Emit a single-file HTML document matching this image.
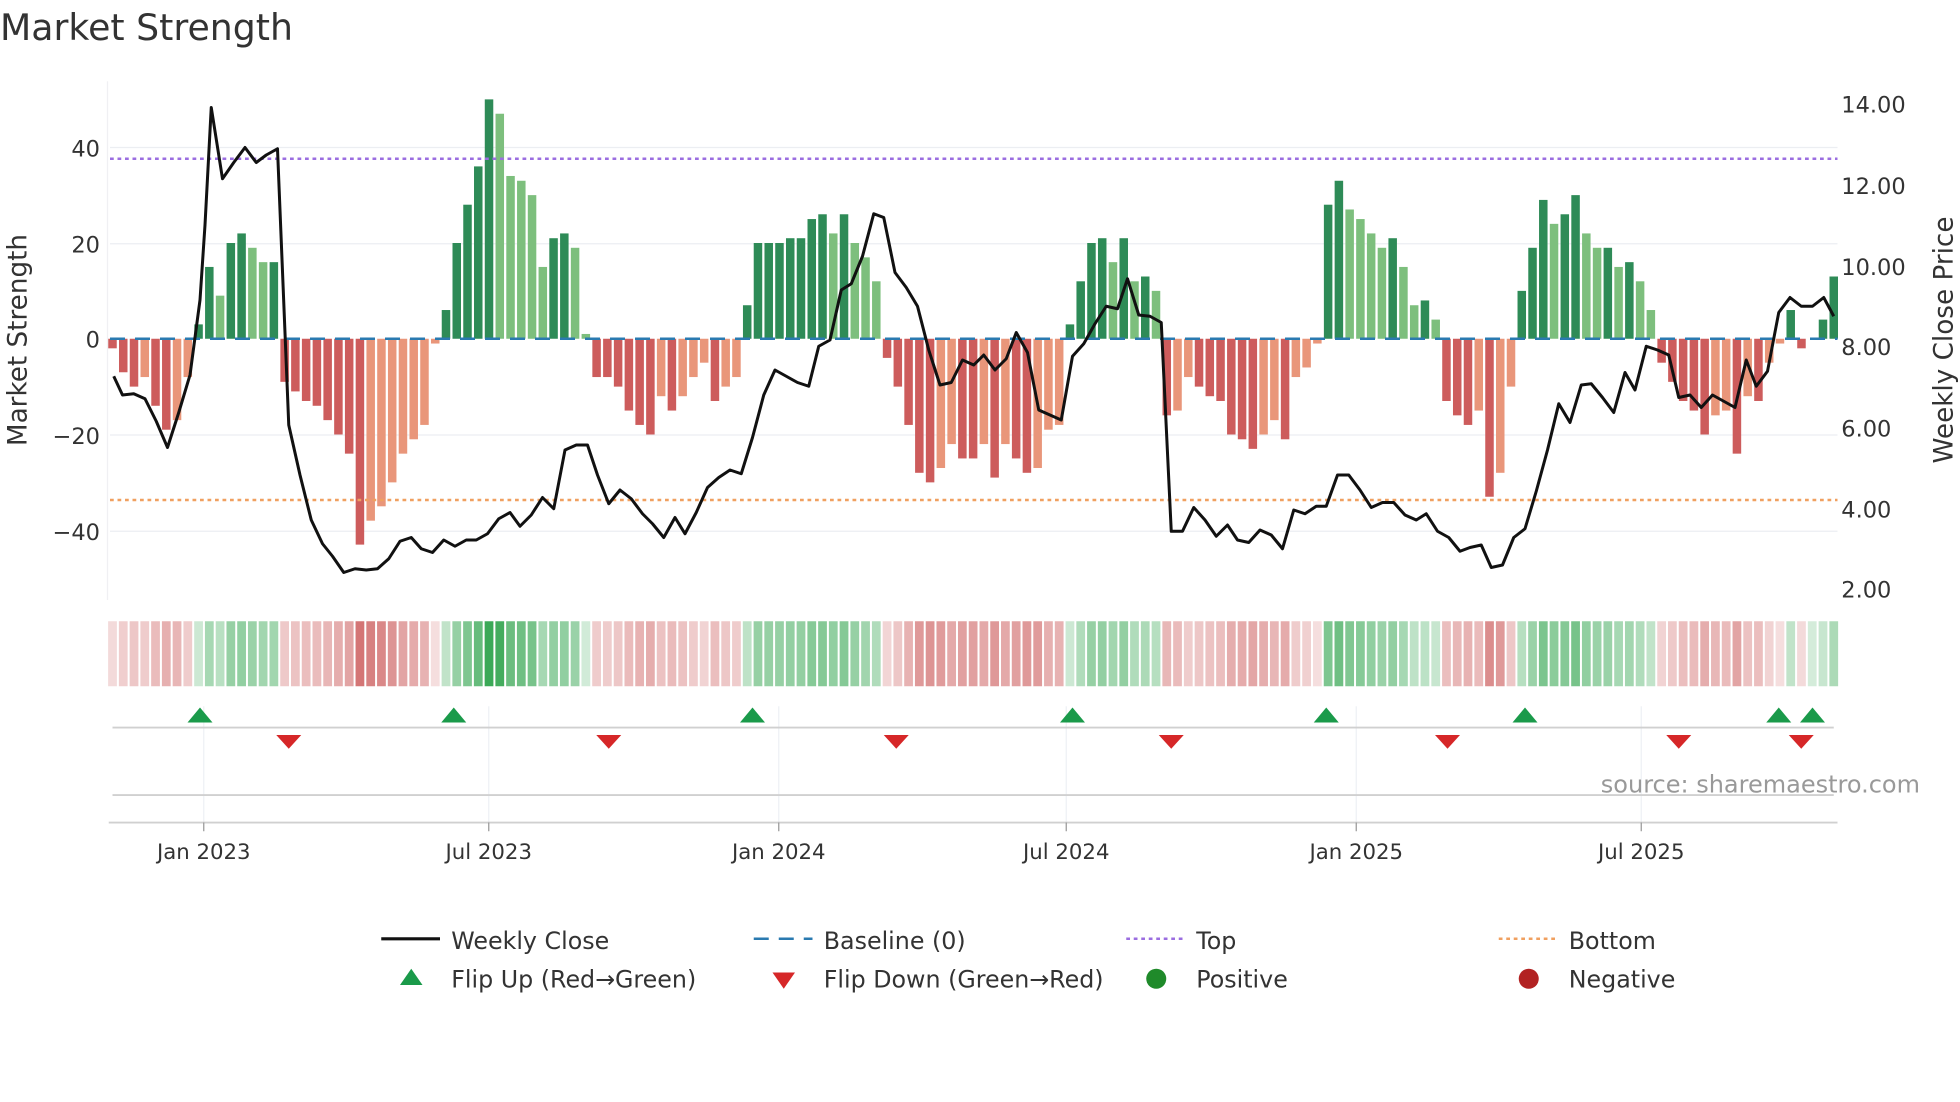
<!DOCTYPE html>
<html><head><meta charset="utf-8"><style>
html,body{margin:0;padding:0;background:#fff;width:1960px;height:1102px;overflow:hidden}
svg{display:block}
text{font-family:"DejaVu Sans","Liberation Sans",sans-serif;fill:#333}
</style></head><body>
<svg id="s" width="1960" height="1102" viewBox="0 0 1568 881.6" xmlns="http://www.w3.org/2000/svg">
<text x="0" y="32" font-size="29">Market Strength</text>
<g stroke="#eceef2" stroke-width="1">
<line x1="88" x2="1470" y1="118" y2="118"/><line x1="88" x2="1470" y1="195" y2="195"/>
<line x1="88" x2="1470" y1="348" y2="348"/><line x1="88" x2="1470" y1="425" y2="425"/>
</g>
<line x1="86" x2="86" y1="65" y2="480" stroke="#f0f0f3"/>
<g font-size="18" text-anchor="end">
<text x="80" y="125">40</text><text x="80" y="202">20</text><text x="80" y="278">0</text>
<text x="80" y="355">−20</text><text x="80" y="432">−40</text>
</g>
<g font-size="18">
<text x="1473" y="90">14.00</text><text x="1473" y="155">12.00</text><text x="1473" y="220">10.00</text>
<text x="1473" y="284">8.00</text><text x="1473" y="349">6.00</text><text x="1473" y="414">4.00</text><text x="1473" y="478">2.00</text>
</g>
<text font-size="21" transform="translate(21,272) rotate(-90)" text-anchor="middle">Market Strength</text>
<text font-size="21" transform="translate(1562,272) rotate(-90)" text-anchor="middle">Weekly Close Price</text>
<g id="bars"></g>
<line x1="88" x2="1470" y1="127" y2="127" stroke="#9b6ee0" stroke-width="2" stroke-dasharray="3,3"/>
<line x1="88" x2="1470" y1="400" y2="400" stroke="#f0a060" stroke-width="2" stroke-dasharray="3,3"/>
<line x1="88" x2="1470" y1="271" y2="271" stroke="#2a7ab0" stroke-width="2" stroke-dasharray="12,8"/>
<polyline id="price" fill="none" stroke="#111" stroke-width="2.4" stroke-linejoin="round"/>
<g id="heat"></g>
<g stroke="#eef0f4"><line x1="163" x2="163" y1="565" y2="658"/><line x1="391" x2="391" y1="565" y2="658"/><line x1="623" x2="623" y1="565" y2="658"/><line x1="853" x2="853" y1="565" y2="658"/><line x1="1085" x2="1085" y1="565" y2="658"/><line x1="1313" x2="1313" y1="565" y2="658"/></g>
<line x1="90" x2="1467" y1="582" y2="582" stroke="#d0d0d0" stroke-width="1.5"/>
<line x1="90" x2="1467" y1="636" y2="636" stroke="#d0d0d0" stroke-width="1.5"/>
<line x1="87" x2="1470" y1="658" y2="658" stroke="#d0d0d0" stroke-width="1.5"/>
<g stroke="#999"><line x1="163" x2="163" y1="658" y2="665"/><line x1="391" x2="391" y1="658" y2="665"/><line x1="623" x2="623" y1="658" y2="665"/><line x1="853" x2="853" y1="658" y2="665"/><line x1="1085" x2="1085" y1="658" y2="665"/><line x1="1313" x2="1313" y1="658" y2="665"/></g>
<g id="marks"></g>
<g font-size="17" text-anchor="middle">
<text x="163" y="687">Jan 2023</text><text x="391" y="687">Jul 2023</text><text x="623" y="687">Jan 2024</text>
<text x="853" y="687">Jul 2024</text><text x="1085" y="687">Jan 2025</text><text x="1313" y="687">Jul 2025</text>
</g>
<text x="1536" y="634" font-size="19.2" text-anchor="end" style="fill:#999">source: sharemaestro.com</text>
<g font-size="19">
<line x1="305" x2="352" y1="751" y2="751" stroke="#111" stroke-width="2.5"/><text x="361" y="759">Weekly Close</text>
<line x1="603" x2="650" y1="751" y2="751" stroke="#2a7ab0" stroke-width="2" stroke-dasharray="12,8"/><text x="659" y="759">Baseline (0)</text>
<line x1="901" x2="948" y1="751" y2="751" stroke="#9b6ee0" stroke-width="2" stroke-dasharray="3,3"/><text x="957" y="759">Top</text>
<line x1="1199" x2="1246" y1="751" y2="751" stroke="#f0a060" stroke-width="2" stroke-dasharray="3,3"/><text x="1255" y="759">Bottom</text>
<polygon points="320,788 329,775 338,788" fill="#1a9a4a"/><text x="361" y="790">Flip Up (Red→Green)</text>
<polygon points="618,778 627,791 636,778" fill="#d62728"/><text x="659" y="790">Flip Down (Green→Red)</text>
<circle cx="925" cy="783" r="8" fill="#1f8a2a"/><text x="957" y="790">Positive</text>
<circle cx="1223" cy="783" r="8" fill="#b22222"/><text x="1255" y="790">Negative</text>
</g>
</svg>
<script>
var v=[-2,-7,-10,-8,-14,-19,-17,-8, 3,15,9,20,22,19,16,16,
-9,-11,-13,-14,-17,-20,-24,-43,-38,-35,-30,-24,-21,-18,-1,
6,20,28,36,50,47,34,33,30,15,21,22,19,1,
-8,-8,-10,-15,-18,-20,-12,-15,-12,-8,-5,-13,-10,-8,
7,20,20,20,21,21,25,26,22,26,20,17,12,
-4,-10,-18,-28,-30,-27,-22,-25,-25,-22,-29,-22,-25,-28,-27,-19,-18,
3,12,20,21,16,21,12,13,10,
-16,-15,-8,-10,-12,-13,-20,-21,-23,-20,-17,-21,-8,-6,-1,
28,33,27,25,22,19,21,15,7,8,4,
-13,-16,-18,-15,-33,-28,-10,
10,19,29,24,26,30,22,19,19,15,16,12,6,
-5,-9,-13,-15,-20,-16,-15,-24,-12,-13,-5,-1,
6,-2,0,4,13];
var n=v.length, x0=90, dx=(1467-90)/(n-1), NS="http://www.w3.org/2000/svg";
function el(t,a,p){var e=document.createElementNS(NS,t);for(var k in a)e.setAttribute(k,a[k]);p.appendChild(e);return e;}
var bars=document.getElementById('bars'),heat=document.getElementById('heat');
for(var i=0;i<n;i++){
 var x=x0+i*dx,val=v[i],prev=i?v[i-1]:0;
 var up=Math.abs(val)>=Math.abs(prev)||(val*prev<=0);
 var col=val>=0?(up?'#2e8b57':'#7dbf7d'):(up?'#cd5c5c':'#e9967a');
 var y0=271,y1=271-val*3.83;
 if(val!==0)el('rect',{x:x-3.4,y:Math.min(y0,y1),width:6.8,height:Math.abs(y1-y0),fill:col},bars);
 var t,c;
 if(val>=0){t=Math.min(1,0.2+val/70);c='rgba(40,160,70,'+t.toFixed(2)+')';}
 else{t=Math.min(1,0.18+(-val)/70);c='rgba(200,80,80,'+t.toFixed(2)+')';}
 el('rect',{x:x-dx/2+0.8,y:497,width:dx-1.6,height:52,fill:c},heat);
}
var p=[91,301,98,316,107,315,116,319,125,337,134,358,143,330,152,300,160,240,164,180,169,86,178,143,187,130,196,118,205,130,213,124,222,119,231,340,240,380,249,416,258,435,266,445,275,458,284,455,293,456,302,455,311,447,320,433,329,430,337,439,346,442,355,432,364,437,373,432,381,432,390,427,399,415,408,410,416,421,425,412,434,398,443,407,452,360,461,356,470,356,478,380,487,403,496,392,505,399,514,411,522,419,531,430,540,414,548,427,557,410,566,390,575,382,584,376,593,379,602,350,611,316,620,296,629,301,638,306,647,309,655,277,664,272,673,232,681,227,690,205,699,171,707,174,716,218,725,230,734,245,743,280,752,308,761,306,770,288,779,292,787,284,796,296,805,287,813,266,822,282,831,328,840,332,849,336,858,285,867,275,876,259,885,245,894,247,902,223,911,252,920,253,929,258,937,425,946,425,955,406,964,416,973,429,982,420,990,432,999,434,1008,424,1017,428,1026,439,1035,408,1044,411,1053,405,1061,405,1070,380,1079,380,1088,392,1097,406,1106,402,1115,402,1124,412,1133,416,1141,411,1150,425,1159,430,1168,441,1176,438,1185,436,1193,454,1202,452,1211,430,1220,423,1229,393,1238,360,1247,323,1256,338,1265,308,1273,307,1282,318,1291,330,1300,298,1308,312,1317,277,1326,280,1335,284,1343,318,1352,316,1361,326,1370,316,1379,321,1388,326,1397,288,1405,309,1414,297,1423,250,1432,238,1441,245,1450,245,1459,238,1467,253];
var s='';for(var j=0;j<p.length;j+=2)s+=p[j]+','+p[j+1]+' ';
document.getElementById('price').setAttribute('points',s);
var m=document.getElementById('marks');
[160,363,602,858,1061,1220,1423,1450].forEach(function(x){el('polygon',{points:(x-10)+',578 '+x+',566 '+(x+10)+',578',fill:'#1a9a4a'},m);});
[231,487,717,937,1158,1343,1441].forEach(function(x){el('polygon',{points:(x-10)+',588 '+x+',599 '+(x+10)+',588',fill:'#d62728'},m);});
</script>
</body></html>
